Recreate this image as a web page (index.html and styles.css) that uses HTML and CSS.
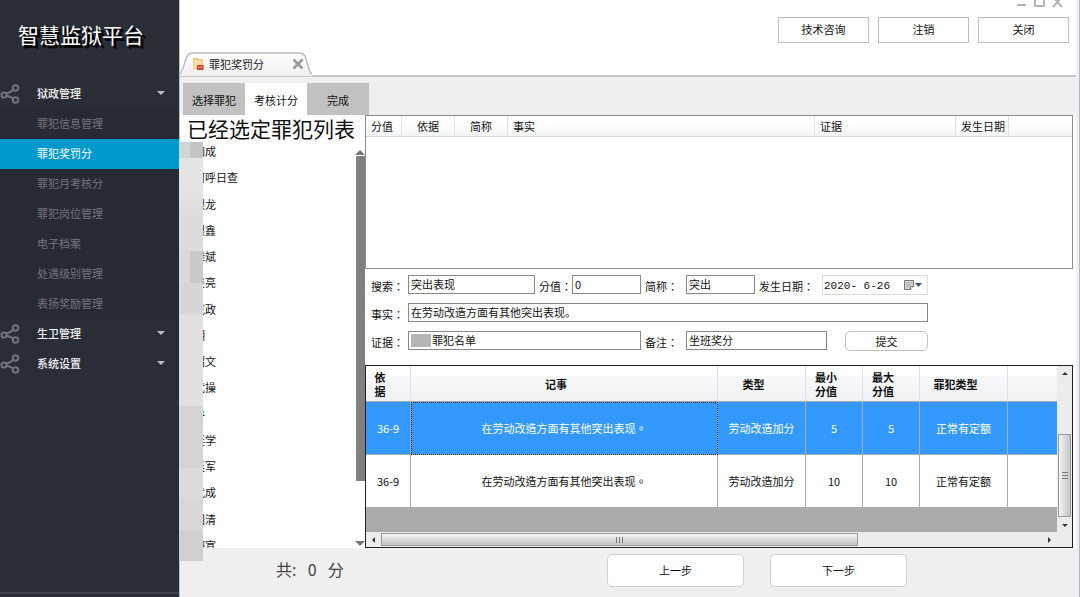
FILE: index.html
```html
<!DOCTYPE html>
<html lang="zh-CN">
<head>
<meta charset="utf-8">
<title>智慧监狱平台</title>
<link rel="stylesheet" href="styles.css">
</head>
<body>
<svg class="defs" width="0" height="0" aria-hidden="true">
  <symbol id="share" viewBox="0 0 20 20">
    <g fill="none" stroke="#70757d" stroke-width="2">
      <circle cx="4" cy="11" r="2.6"/><circle cx="15.500" cy="4" r="2.800"/><circle cx="15.500" cy="16" r="2.800"/>
      <path d="M6.300 9.500 10.500 8 13.300 5.600M6.400 11.800 10.500 13 13 14.500"/>
    </g>
  </symbol>
</svg>
<div class="app">
  <aside class="sidebar">
    <h1 class="brand">智慧监狱平台</h1>
    <nav class="nav">
      <button class="nav-group" type="button"><svg class="share"><use href="#share"/></svg><span>狱政管理</span><i class="caret"></i></button>
      <a class="nav-item" href="#">罪犯信息管理</a>
      <a class="nav-item active" href="#">罪犯奖罚分</a>
      <a class="nav-item" href="#">罪犯月考核分</a>
      <a class="nav-item" href="#">罪犯岗位管理</a>
      <a class="nav-item" href="#">电子档案</a>
      <a class="nav-item" href="#">处遇级别管理</a>
      <a class="nav-item" href="#">表扬奖励管理</a>
      <button class="nav-group" type="button"><svg class="share"><use href="#share"/></svg><span>生卫管理</span><i class="caret"></i></button>
      <button class="nav-group" type="button"><svg class="share"><use href="#share"/></svg><span>系统设置</span><i class="caret"></i></button>
    </nav>
  </aside>

  <main class="main">
    <header class="header">
      <div class="window-controls">
        <svg width="46" height="8" viewBox="0 0 46 8" fill="none" stroke="#b4b4b4" stroke-width="2"><path d="M0 5h9M18 -3v9h9v-9M36 7l9-10M45 7l-9-10"/></svg>
      </div>
      <div class="actions">
        <button type="button">技术咨询</button>
        <button type="button">注销</button>
        <button type="button">关闭</button>
      </div>
      <div class="page-tab">
        <svg class="tab-shape" width="132" height="24" viewBox="0 0 132 24">
          <defs><linearGradient id="tabfill" x1="0" y1="0" x2="0" y2="1"><stop offset="0" stop-color="#fff"/><stop offset="1" stop-color="#efefef"/></linearGradient></defs>
          <path d="M0 24V22C3 19 5 7 8 3Q9 1 12 1H120Q123 1 125 4L129 17Q130 21 132 22V24Z" fill="url(#tabfill)"/>
          <path d="M0 22C3 19 5 7 8 3Q9 1 12 1H120Q123 1 125 4L129 17Q130 21 132 22" fill="none" stroke="#bdbdbd" stroke-width="1.500"/>
        </svg>
        <svg class="tab-icon" width="12" height="12" viewBox="0 0 12 12"><path d="M1 0h5l1 1h4v10H1z" fill="#f5c879"/><path d="M2 2h8v8H2z" fill="#fbdca6"/><path d="M5 7h6.500v5H5z" fill="#d93c2e"/><path d="M6.500 8v2M8 9v1.500M9.500 8v2" stroke="#fbb" stroke-width=".7"/></svg>
        <span>罪犯奖罚分</span>
        <button class="tab-close" type="button" aria-label="关闭标签"><svg width="12" height="12" viewBox="0 0 12 12"><path d="M1.500 1.500l9 9M10.500 1.500l-9 9" stroke="#999" stroke-width="2.500"/></svg></button>
      </div>
    </header>

    <div class="steps" role="tablist">
      <button type="button" role="tab">选择罪犯</button>
      <button type="button" role="tab" class="current" aria-selected="true">考核计分</button>
      <button type="button" role="tab">完成</button>
    </div>

    <div class="content">
      <section class="people">
        <h2>已经选定罪犯列表</h2>
        <div class="people-body">
          <ul>
            <li>如成</li><li>阿呼日查</li><li>银龙</li><li>银鑫</li><li>继斌</li><li>俊亮</li><li>克政</li><li>明</li>
            <li>绍文</li><li>武操</li><li>谷</li><li>廷学</li><li>廷军</li><li>武成</li><li>国清</li><li>德宣</li>
          </ul>
          <div class="slim-bar"><i class="up"></i><b></b><i class="down"></i></div>
        </div>
        <div class="mask"><i></i><i></i><i></i><i></i><i></i><i></i><i></i><i></i></div>
      </section>

      <section class="work">
        <div class="records">
          <table>
            <colgroup><col class="r1"><col class="r2"><col class="r2"><col><col class="r3"><col class="r2"><col class="r4"></colgroup>
            <thead><tr><th>分值</th><th class="mid">依据</th><th class="mid">简称</th><th>事实</th><th>证据</th><th>发生日期</th><th></th></tr></thead>
          </table>
        </div>

        <form class="form">
          <label for="search">搜索：</label><input id="search" type="text" value="突出表现">
          <label for="score">分值：</label><input id="score" type="text" value="0">
          <label for="short">简称：</label><input id="short" type="text" value="突出">
          <label for="date">发生日期：</label>
          <div class="date"><input id="date" type="text" value="2020- 6-26"><button type="button" aria-label="选择日期"><svg width="20" height="12" viewBox="0 0 20 12"><path d="M1.500 1.500h9v6l-3 3h-6z" fill="#d4d4d4" stroke="#777"/><path d="M7.500 10.500v-3h3" fill="#fff" stroke="#777"/><path d="M3 4h6M3 6h5M4 3v6M6 3v6" stroke="#aaa" stroke-width=".6"/><path d="M12 4h7l-3.500 4z" fill="#44566f"/></svg></button></div>
          <label for="fact">事实：</label><input id="fact" class="wide" type="text" value="在劳动改造方面有其他突出表现。">
          <label for="proof">证据：</label><div class="proof"><input id="proof" type="text" value="罪犯名单"><i></i></div>
          <label for="note">备注：</label>
          <div class="last"><input id="note" type="text" value="坐班奖分"><button type="button">提交</button></div>
        </form>

        <div class="rules">
          <div class="rules-view">
            <table>
              <colgroup><col class="c1"><col><col class="c2"><col class="c3"><col class="c3"><col class="c2"><col class="c4"></colgroup>
              <thead><tr><th>依<br>据</th><th>记事</th><th>类型</th><th>最小<br>分值</th><th>最大<br>分值</th><th>罪犯类型</th><th></th></tr></thead>
              <tbody>
                <tr class="selected"><td>36-9</td><td class="event">在劳动改造方面有其他突出表现。</td><td>劳动改造加分</td><td>5</td><td>5</td><td>正常有定额</td><td></td></tr>
                <tr><td>36-9</td><td class="event">在劳动改造方面有其他突出表现。</td><td>劳动改造加分</td><td>10</td><td>10</td><td>正常有定额</td><td></td></tr>
              </tbody>
            </table>
          </div>
          <div class="vbar"><i class="up"></i><b></b><i class="down"></i></div>
          <div class="hbar"><i class="left"></i><b></b><i class="right"></i></div>
        </div>
      </section>
    </div>

    <footer class="footer">
      <p>共:&ensp;&thinsp;0&ensp;&thinsp;分</p>
      <button type="button">上一步</button>
      <button type="button">下一步</button>
    </footer>
  </main>
</div>
</body>
</html>
```
FILE: styles.css
```css
* { box-sizing: border-box; }
body {
  margin: 0;
  font: 11px/14px "Noto Sans CJK SC", sans-serif;
  color: #111;
  background: #efefef;
}
button, input { font: inherit; color: inherit; }
button { padding: 0; background: none; border: 0; }
h1, h2, p, ul { margin: 0; padding: 0; font-weight: 400; }
i { display: block; }
.defs { position: absolute; }

.app { display: flex; min-height: 100vh; }

/* Sidebar */
.sidebar {
  display: flex;
  flex-direction: column;
  flex: 0 0 180px;
  background: #292d36;
  border-right: 1px solid #bcbec2;
  padding-bottom: 3px;
}
.brand {
  height: 79px;
  padding: 19px 0 0 18px;
  font-size: 21px;
  line-height: 30px;
  color: #fff;
  text-shadow: 2px 2px 0 #000, 3px 3px 0 #000;
}
.nav { display: flex; flex-direction: column; flex: 1; border-bottom: 2px solid #41444f; }
.nav-group { display: flex; align-items: center; height: 30px; padding-right: 14px; color: #f4f4f4; font-weight: 500; }
.nav-group span { padding-bottom: 2px; }
.share { width: 20px; height: 20px; margin-right: 17px; }
.caret { margin: 0 0 3px auto; border: 4px solid transparent; border-top-color: #b9bbc0; border-bottom: 0; }
.nav-item { height: 30px; padding-left: 37px; line-height: 28px; color: #73757a; text-decoration: none; background: #262a32; }
.nav-item.active { background: #0099cc; color: #fff; }

/* Header */
.main { display: flex; flex-direction: column; flex: 1; min-width: 0; border-right: 1px solid #a6bdd6; }
.header {
  display: flex;
  flex-direction: column;
  height: 77px;
  margin-right: 3px;
  background: #fff;
  border-bottom: 2px solid #c6c6c6;
}
.window-controls { display: flex; justify-content: flex-end; height: 18px; padding-right: 13px; }
.actions { display: flex; justify-content: flex-end; gap: 9px; padding-right: 7px; }
.actions button { width: 91px; height: 26px; padding-bottom: 2px; background: #fff; border: 1px solid #bdbdbd; }
.page-tab {
  position: relative;
  display: flex;
  align-items: center;
  width: 132px;
  height: 24px;
  margin-top: 9px;
  padding: 0 8px 0 12px;
  color: #222;
}
.page-tab > * { position: relative; }
.page-tab .tab-shape { position: absolute; left: 0; top: 0; }
.tab-icon { margin-right: 5px; }
.tab-close { display: flex; margin-left: auto; }

.steps { display: flex; padding: 6px 0 0 3px; }
.steps button { width: 62px; height: 32px; background: #c1c1c1; padding-top: 2px; }
.steps .current { background: #fff; }

/* Content */
.content { display: grid; grid-template-columns: 185px minmax(0, 1fr); flex: 1; margin-right: 3px; background: #fff; }
.people { position: relative; display: flex; flex-direction: column; }
.people h2 { padding-left: 7px; font-size: 21px; line-height: 26px; height: 24px; }
.people-body { display: flex; flex: 1 1 0; overflow: hidden; }
.people ul { display: flex; flex-direction: column; flex: 1; margin-bottom: -11px; padding-left: 14px; list-style: none; }
.people li { display: flex; flex: 1; align-items: center; padding-bottom: 2px; }
.slim-bar { display: flex; flex-direction: column; align-items: center; width: 10px; padding: 11px 0 2px; }
.slim-bar b { width: 9px; flex: 0 0 82%; background: #808080; margin-top: 1px; }
.slim-bar .down { margin-top: auto; }
.slim-bar .up { border: 5px solid transparent; border-bottom-color: #777; border-top: 0; }
.slim-bar .down { border: 5px solid transparent; border-top-color: #777; border-bottom: 0; }
.mask {
  position: absolute;
  left: -1px;
  top: 27px;
  bottom: -13px;
  width: 24px;
  display: flex;
  flex-direction: column;
  background: #dedede;
}
.mask i { flex: 2; }
.mask i:nth-child(1) { flex: 0 0 16px; background: linear-gradient(90deg, #cfd6d6 11px, #c4c4c4 11px); }
.mask i:nth-child(2) { flex: 3; background: linear-gradient(#e4e4e4 30%, #dcdcdc 60%); }
.mask i:nth-child(3) { flex: 0 0 32px; background: linear-gradient(90deg, #dadada 11px, #c9c9c9 11px); }
.mask i:nth-child(4) { flex: 1; background: #d6d6d6; }
.mask i:nth-child(5) { flex: 3; background: #e0e0e0; }
.mask i:nth-child(6) { background: #d4d4d4; }
.mask i:nth-child(7) { flex: 1; background: #dcdcdc; }
.mask i:nth-child(8) { background: linear-gradient(#d7d7d7 50%, #d0d0d0 50%); }

.work { display: flex; flex-direction: column; padding-right: 3px; min-width: 0; }
table { width: 100%; table-layout: fixed; border-collapse: separate; border-spacing: 0; }
.records { height: 154px; border: 1px solid #888c92; }
.records th {
  height: 21px;
  padding: 0 5px;
  font-weight: 400;
  text-align: left;
  white-space: nowrap;
  background: linear-gradient(#fff 40%, #f2f3f5);
  border-right: 1px solid #dfe1e4;
  border-bottom: 1px solid #d5d5d5;
}
.records th.mid { text-align: center; }
.records th:last-child { border-right: 0; }
.r1 { width: 36px; }
.r2 { width: 53px; }
.r3 { width: 141px; }
.r4 { width: 63px; }

/* Form */
.form {
  display: grid;
  grid-template-columns: 37fr 127fr 37fr 69fr 45fr 69fr 67fr 106fr;
  grid-auto-rows: 20px;
  gap: 8px 0;
  max-width: 563px;
  padding: 6px 0 14px 6px;
}
.form label { align-self: center; padding: 1px 0 0 4px; white-space: nowrap; }
.form > label:first-of-type, .form label[for="fact"], .form label[for="proof"] { padding-left: 0; }
.form label, .event { font-family: "Noto Sans CJK TC", sans-serif; font-feature-settings: "locl" 0; }
.form input { width: 100%; min-width: 0; height: 19px; padding: 0 2px 2px; background: #fff; border: 1px solid #888; border-radius: 0; }
.form .wide { grid-column: 2 / -1; }
.date { display: flex; align-items: center; border: 1px solid #dcdcdc; }
.form .date input { border: 0; height: 18px; padding: 2px 1px 0; font-family: "Liberation Mono", monospace; }
.date button { display: flex; padding-right: 4px; }
.proof { position: relative; grid-column: 2 / 5; }
.form .proof input { padding-left: 23px; }
.proof i { position: absolute; left: 3px; top: 3px; width: 20px; height: 13px; background: #b5b5b5; }
.last { display: flex; grid-column: 6 / -1; gap: 18px; }
.last input { flex: 140; }
.last button { flex: 0 0 83px; background: #fff; border: 1px solid #c2c2c2; border-radius: 5px; }

/* Rule table */
.rules {
  display: grid;
  grid-template-columns: minmax(0, 1fr) 15px;
  grid-template-rows: 1fr 15px;
  flex: 1;
  border: 1px solid #222;
  background: #ececec;
}
.rules-view { background: #aaa; }
.rules th, .rules td { text-align: center; border-right: 1px solid #ababab; border-bottom: 1px solid #ababab; padding: 0; white-space: nowrap; }
.rules th {
  height: 36px;
  padding-right: 16px;
  font-weight: 700;
  background: linear-gradient(#fff 25%, #f7f8fa 30%, #f0f1f3);
  border-right-color: #dedfe2;
}
.rules td { height: 53px; background: #fff; }
.rules th:last-child, .rules td:last-child { border-right: 0; }
.rules .selected td { background: #3399ff; color: #fff; }
.rules .selected .event { outline: 1px dotted #222; outline-offset: -1px; }
.c1 { width: 45px; }
.c2 { width: 88px; }
.c3 { width: 57px; }
.c4 { width: 49px; }
.vbar { grid-row: 1 / 3; grid-column: 2; display: flex; flex-direction: column; align-items: center; padding: 6px 0; }
.vbar b {
  width: 13px;
  height: 83px;
  margin: auto 0 7px;
  border: 1px solid #999;
  background: linear-gradient(#777, #777) center / 6px 1px no-repeat, linear-gradient(#777, #777) center 37px / 6px 1px no-repeat, linear-gradient(#777, #777) center 43px / 6px 1px no-repeat, linear-gradient(90deg, #f4f4f4, #c4c4c4);
}
.hbar { display: flex; align-items: center; padding: 0 6px; }
.hbar b {
  flex: 0 1 477px;
  height: 13px;
  margin-left: 6px;
  border: 1px solid #999;
  background: linear-gradient(#777, #777) center / 1px 6px no-repeat, linear-gradient(#777, #777) calc(50% - 3px) center / 1px 6px no-repeat, linear-gradient(#777, #777) calc(50% + 3px) center / 1px 6px no-repeat, linear-gradient(#f4f4f4, #c4c4c4);
}
.vbar .up { border: 3px solid transparent; border-top: 0; border-bottom-color: #333; }
.vbar .down { border: 3px solid transparent; border-bottom: 0; border-top-color: #333; margin-bottom: 14px; }
.hbar .left { border: 3px solid transparent; border-left: 0; border-right-color: #333; }
.hbar .right { border: 3px solid transparent; border-right: 0; border-left-color: #333; margin-left: auto; }

/* Footer */
.footer { display: flex; padding: 6px 0 10px 96px; }
.footer p { flex: 0 1 331px; font-size: 16px; line-height: 30px; color: #444; }
.footer button { width: 137px; height: 33px; margin-right: 26px; padding-bottom: 2px; background: #fff; border: 1px solid #d2d2d2; border-radius: 5px; }
```
